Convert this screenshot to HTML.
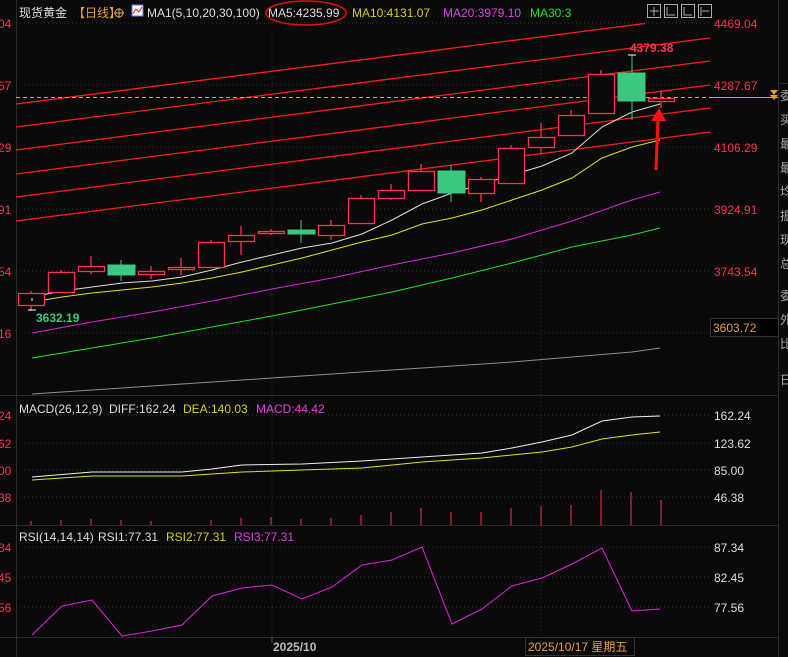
<!DOCTYPE html>
<html><head><meta charset="utf-8"><style>
body{margin:0;background:#0a0a0a;width:788px;height:657px;overflow:hidden;font-family:"Liberation Sans","Noto Sans CJK SC",sans-serif}
svg{display:block}
text{font-family:"Liberation Sans","Noto Sans CJK SC",sans-serif;font-size:12px}
</style></head><body>
<svg width="788" height="657" viewBox="0 0 788 657" xmlns="http://www.w3.org/2000/svg">
<rect width="788" height="657" fill="#0a0a0a"/>
<!-- frame lines -->
<g stroke="#2a2a2a" stroke-width="1">
<line x1="16.5" y1="0" x2="16.5" y2="657"/>
<line x1="0" y1="395.5" x2="778" y2="395.5"/>
<line x1="0" y1="525.5" x2="778" y2="525.5"/>
<line x1="0" y1="637.5" x2="778" y2="637.5"/>
<line x1="778.5" y1="0" x2="778.5" y2="657"/>
<line x1="778" y1="83.5" x2="788" y2="83.5"/>
<line x1="778" y1="375.5" x2="788" y2="375.5"/>
</g>
<!-- grid dotted -->
<g stroke="#333" stroke-dasharray="1,3">
<line x1="16" y1="23" x2="710" y2="23"/><line x1="16" y1="85" x2="710" y2="85"/>
<line x1="16" y1="147" x2="710" y2="147"/><line x1="16" y1="209" x2="710" y2="209"/>
<line x1="16" y1="271" x2="710" y2="271"/><line x1="16" y1="333" x2="710" y2="333"/>
<line x1="16" y1="415" x2="710" y2="415"/><line x1="16" y1="443" x2="710" y2="443"/>
<line x1="16" y1="470" x2="710" y2="470"/><line x1="16" y1="497" x2="710" y2="497"/>
<line x1="16" y1="547" x2="710" y2="547"/><line x1="16" y1="577" x2="710" y2="577"/>
<line x1="16" y1="607" x2="710" y2="607"/>
<line x1="272" y1="30" x2="272" y2="637"/><line x1="541" y1="30" x2="541" y2="637"/>
</g>
<!-- red channel lines -->
<g stroke="#ff1a1a" stroke-width="1.3">
<line x1="16" y1="104" x2="645" y2="23.5"/>
<line x1="16" y1="127" x2="710" y2="38"/>
<line x1="16" y1="150" x2="710" y2="61"/>
<line x1="16" y1="174" x2="710" y2="85"/>
<line x1="16" y1="197" x2="710" y2="108"/>
<line x1="16" y1="221" x2="710" y2="132"/>
</g>
<line x1="16" y1="97.5" x2="710" y2="97.5" stroke="#d8a060" stroke-dasharray="4,3"/>
<line x1="710" y1="97.5" x2="778" y2="97.5" stroke="#e89a30"/>
<polygon points="770,90 778,90 774,95" fill="#e89a30"/><polygon points="770,95 778,95 774,100" fill="#e89a30"/>
<!-- MA lines -->
<polyline fill="none" stroke="#ddd" stroke-width="1" points="32,297 62,291 92,287 122,283 152,281 182,277 212,270 242,262 272,255 302,248 332,243 362,234 392,220 422,204 452,193 482,184 512,175 542,166 572,153 602,127 632,112 660,104"/>
<polyline fill="none" stroke="#e0e020" stroke-width="1" points="32,302 62,297 92,293 122,290 152,287 182,283 212,278 242,272 272,265 302,258 332,250 362,242 392,235 422,224 452,218 482,210 512,200 542,190 572,178 602,158 632,147 660,140"/>
<polyline fill="none" stroke="#e020e0" stroke-width="1" points="32,333 92,322 152,312 212,301 272,289 332,278 392,265 452,253 512,239 572,221 632,200 660,192"/>
<polyline fill="none" stroke="#20e020" stroke-width="1" points="32,358 92,348 152,338 212,327 272,316 332,304 392,292 452,278 512,263 572,247 632,235 660,228"/>
<polyline fill="none" stroke="#909090" stroke-width="1" points="32,394 152,386 272,378 392,370 512,362 632,352 660,348"/>
<!-- candles -->
<g stroke="#ff3050" stroke-width="1.3" fill="#0a0a0a">
<line x1="31" y1="291" x2="31" y2="311"/><rect x="18.5" y="293.5" width="26" height="12"/>
<line x1="61" y1="270" x2="61" y2="293"/><rect x="48.5" y="272.5" width="26" height="20"/>
<line x1="91" y1="256" x2="91" y2="274"/><rect x="78.5" y="266.5" width="26" height="5"/>
<line x1="151" y1="266" x2="151" y2="279"/><rect x="138.5" y="271.5" width="26" height="3"/>
<line x1="181" y1="258" x2="181" y2="275"/><rect x="168.5" y="267.5" width="26" height="2"/>
<line x1="211" y1="240" x2="211" y2="268"/><rect x="198.5" y="242.5" width="26" height="25"/>
<line x1="241" y1="226" x2="241" y2="255"/><rect x="228.5" y="235.5" width="26" height="6"/>
<line x1="271" y1="229" x2="271" y2="235"/><rect x="258.5" y="231.5" width="26" height="2"/>
<line x1="331" y1="220" x2="331" y2="240"/><rect x="318.5" y="225.5" width="26" height="10"/>
<line x1="361" y1="195" x2="361" y2="224"/><rect x="348.5" y="198.5" width="26" height="25"/>
<line x1="391" y1="184" x2="391" y2="200"/><rect x="378.5" y="190.5" width="26" height="8"/>
<line x1="421" y1="164" x2="421" y2="191"/><rect x="408.5" y="171.5" width="26" height="19"/>
<line x1="481" y1="177" x2="481" y2="202"/><rect x="468.5" y="179.5" width="26" height="14"/>
<line x1="511" y1="145" x2="511" y2="184"/><rect x="498.5" y="148.5" width="26" height="35"/>
<line x1="541" y1="123" x2="541" y2="154"/><rect x="528.5" y="137.5" width="26" height="10"/>
<line x1="571" y1="110" x2="571" y2="135"/><rect x="558.5" y="115.5" width="26" height="20"/>
<line x1="601" y1="70" x2="601" y2="114"/><rect x="588.5" y="74.5" width="26" height="39"/>
<line x1="661" y1="90" x2="661" y2="108"/><rect x="648.5" y="98.5" width="26" height="3"/>
</g>
<g fill="#3cc880" stroke="#3cc880">
<line x1="121" y1="260" x2="121" y2="281"/><rect x="108" y="265" width="27" height="10"/>
<line x1="301" y1="220" x2="301" y2="243"/><rect x="288" y="230" width="27" height="4"/>
<line x1="451" y1="165" x2="451" y2="202"/><rect x="438" y="171" width="27" height="22"/>
<line x1="632" y1="55" x2="632" y2="120"/><rect x="618" y="73" width="27" height="28"/>
</g>
<line x1="628" y1="55" x2="636" y2="55" stroke="#fff"/><line x1="32" y1="298" x2="32" y2="301" stroke="#fff"/>
<line x1="28" y1="310" x2="36" y2="310" stroke="#fff"/>
<!-- arrow -->
<line x1="656" y1="170" x2="658" y2="118" stroke="#ff1010" stroke-width="3"/>
<polygon points="651,121 666,121 659,108" fill="#ff1010"/>
<text x="630" y="52" fill="#ff3050" font-size="13" font-weight="bold">4379.38</text>
<text x="36" y="322" fill="#3cc880" font-size="13" font-weight="bold">3632.19</text>
<!-- MACD -->
<polyline fill="none" stroke="#eee" stroke-width="1" points="32,477 92,472 182,472 212,469 242,465 302,464 362,461 422,457 482,453 512,448 542,442 572,435 602,421 632,417 660,416"/>
<polyline fill="none" stroke="#e0e020" stroke-width="1" points="32,480 92,476 182,476 242,472 302,470 362,468 422,462 482,458 542,452 572,447 602,439 632,435 660,432"/>
<g stroke="#ff3050" stroke-width="1">
<line x1="31" y1="521" x2="31" y2="525"/><line x1="61" y1="520" x2="61" y2="525"/><line x1="91" y1="519" x2="91" y2="525"/><line x1="121" y1="520" x2="121" y2="525"/><line x1="151" y1="521" x2="151" y2="525"/>
<line x1="211" y1="520" x2="211" y2="525"/><line x1="241" y1="518" x2="241" y2="525"/><line x1="271" y1="517" x2="271" y2="525"/><line x1="301" y1="519" x2="301" y2="525"/><line x1="331" y1="518" x2="331" y2="525"/>
<line x1="361" y1="515" x2="361" y2="525"/><line x1="391" y1="512" x2="391" y2="525"/><line x1="421" y1="508" x2="421" y2="525"/><line x1="451" y1="512" x2="451" y2="525"/><line x1="481" y1="512" x2="481" y2="525"/>
<line x1="511" y1="508" x2="511" y2="525"/><line x1="541" y1="506" x2="541" y2="525"/><line x1="571" y1="505" x2="571" y2="525"/><line x1="601" y1="490" x2="601" y2="525"/><line x1="631" y1="492" x2="631" y2="525"/><line x1="661" y1="500" x2="661" y2="525"/>
</g>
<!-- RSI -->
<polyline fill="none" stroke="#e020e0" stroke-width="1" points="32,635 62,606 92,600 122,636 152,631 182,625 212,596 242,588 272,585 302,599 332,587 362,565 392,560 422,547 452,624 482,609 512,586 542,578 572,564 602,548 632,611 660,609"/>
<!-- headers -->
<text x="19" y="17" fill="#ddd" font-size="13">现货黄金</text>
<text x="73" y="17" fill="#e8a040" font-size="13">【日线】</text>
<circle cx="119" cy="13" r="4" fill="none" stroke="#e8a040"/><line x1="114" y1="13" x2="124" y2="13" stroke="#e8a040"/><line x1="119" y1="8" x2="119" y2="18" stroke="#e8a040"/>
<rect x="132" y="5" width="11" height="11" fill="#fff" stroke="#6070ff"/><polyline points="133,14 136,9 139,12 142,7" fill="none" stroke="#e02020"/>
<text x="147" y="17" fill="#ddd" font-size="13">MA1(5,10,20,30,100)</text>
<text x="268" y="17" fill="#ddd" font-size="13">MA5:4235.99</text>
<ellipse cx="306" cy="13" rx="40" ry="12" fill="none" stroke="#e01010" stroke-width="1.5"/>
<text x="352" y="17" fill="#d0d020" font-size="13">MA10:4131.07</text>
<text x="443" y="17" fill="#e040e0" font-size="13">MA20:3979.10</text>
<text x="530" y="17" fill="#20e020" font-size="13">MA30:3</text>
<g fill="none" stroke="#aaa"><rect x="647.5" y="4.5" width="13" height="13"/><rect x="664.5" y="4.5" width="13" height="13"/><rect x="681.5" y="4.5" width="13" height="13"/><rect x="698.5" y="4.5" width="13" height="13"/>
<path d="M654 7v9M650 11h9M667 7v8h8M684 7v8h8M701 7v9M702 11h7"/></g>
<text x="19" y="413" fill="#ddd" font-size="13">MACD(26,12,9)</text>
<text x="109" y="413" fill="#ddd" font-size="13">DIFF:162.24</text>
<text x="183" y="413" fill="#d0d020" font-size="13">DEA:140.03</text>
<text x="256" y="413" fill="#e040e0" font-size="13">MACD:44.42</text>
<text x="19" y="541" fill="#ddd" font-size="13">RSI(14,14,14)</text>
<text x="98" y="541" fill="#ddd" font-size="13">RSI1:77.31</text>
<text x="166" y="541" fill="#d0d020" font-size="13">RSI2:77.31</text>
<text x="234" y="541" fill="#e040e0" font-size="13">RSI3:77.31</text>
<!-- left labels -->
<g fill="#ff3050" font-size="13">
<text x="-2" y="28">04</text><text x="-2" y="90">67</text><text x="-2" y="152">29</text><text x="-2" y="214">91</text><text x="-2" y="276">54</text><text x="-2" y="338">16</text>
<text x="-2" y="420">24</text><text x="-2" y="448">62</text><text x="-2" y="475">00</text><text x="-2" y="502">38</text>
<text x="-2" y="552">34</text><text x="-2" y="582">45</text><text x="-2" y="612">56</text>
</g>
<!-- right labels -->
<g fill="#ff3050" font-size="13">
<text x="714" y="28">4469.04</text><text x="714" y="90">4287.67</text><text x="714" y="152">4106.29</text><text x="714" y="214">3924.91</text><text x="714" y="276">3743.54</text>
</g>
<g fill="#ddd" font-size="13">
<text x="714" y="420">162.24</text><text x="714" y="448">123.62</text><text x="714" y="475">85.00</text><text x="714" y="502">46.38</text>
<text x="714" y="552">87.34</text><text x="714" y="582">82.45</text><text x="714" y="612">77.56</text>
</g>
<rect x="710.5" y="318.5" width="68" height="18" fill="#000" stroke="#333"/>
<text x="713" y="332" fill="#e8a040" font-size="13">3603.72</text>
<!-- sidebar -->
<g fill="#aaa" font-size="13">
<text x="780" y="100">委</text><text x="780" y="124">买</text><text x="780" y="148">最</text><text x="780" y="172">最</text><text x="780" y="196">均</text><text x="780" y="220">振</text><text x="780" y="244">现</text><text x="780" y="268">总</text><text x="780" y="300">委</text><text x="780" y="324">外</text><text x="780" y="348">比</text><text x="780" y="384">日</text>
</g>
<!-- bottom axis -->
<line x1="272" y1="637" x2="272" y2="643" stroke="#555"/>
<text x="273" y="651" fill="#bbb" font-size="12" font-weight="bold">2025/10</text>
<rect x="525.5" y="637.5" width="109" height="18" fill="#0a0a0a" stroke="#333"/>
<text x="528" y="651" fill="#e8a040" font-size="12">2025/10/17 星期五</text>
</svg>
</body></html>
